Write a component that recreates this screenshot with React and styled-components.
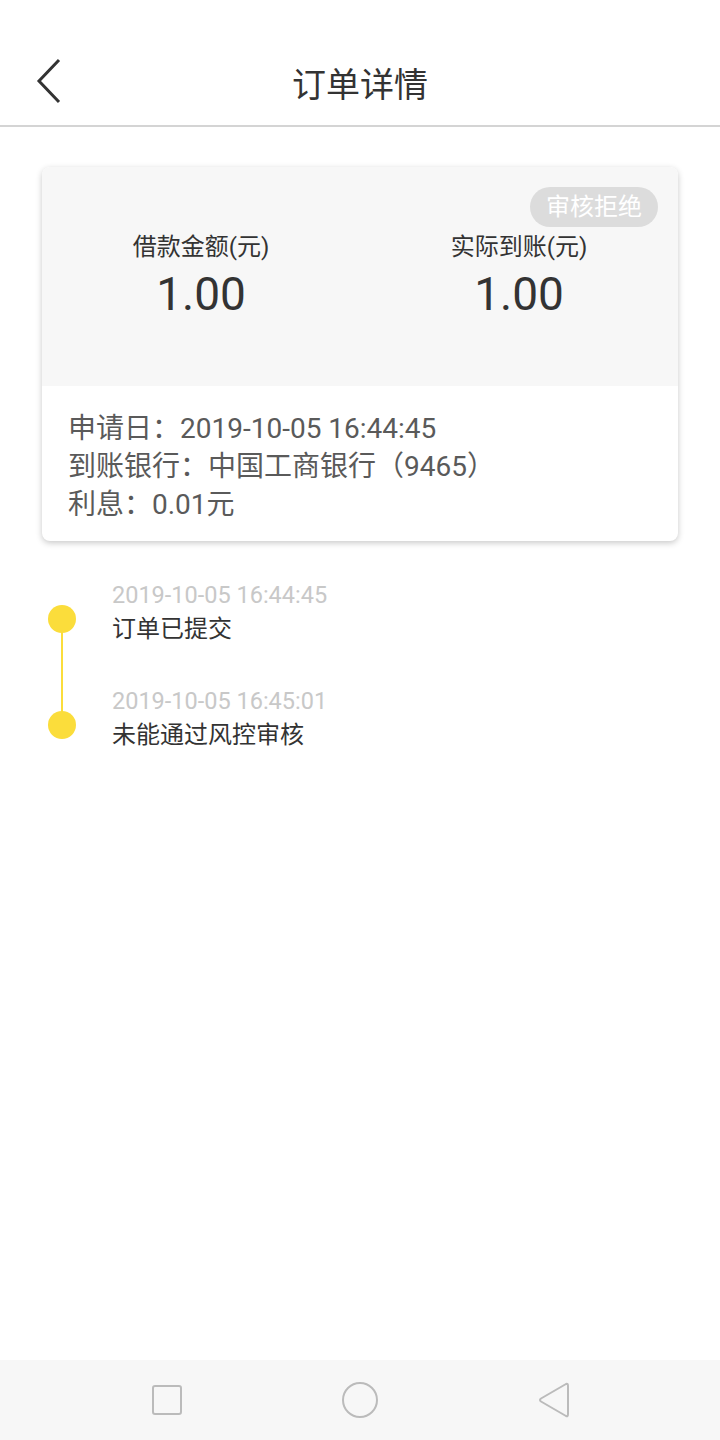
import React from 'react';
import styled, { createGlobalStyle } from 'styled-components';

const GlobalStyle = createGlobalStyle`
  html, body {
    margin: 0;
    padding: 0;
    background: #fff;
    font-family: Roboto, "Noto Sans CJK SC", sans-serif;
  }
`;

const Page = styled.main`
  width: 720px;
  height: 1440px;
  display: flex;
  flex-direction: column;
  background: #fff;
`;

const Header = styled.header`
  height: 127px;
  padding-top: 40px;
  box-sizing: border-box;
  display: flex;
  align-items: center;
  justify-content: center;
  position: relative;
  border-bottom: 2px solid #d4d4d4;
`;

const BackButton = styled.button`
  position: absolute;
  left: 30px;
  top: 55px;
  width: 40px;
  height: 52px;
  border: 0;
  padding: 0;
  background: transparent;
`;

const Title = styled.h1`
  margin: 0;
  font-size: 34px;
  font-weight: 400;
  color: #333;
`;

const Content = styled.section`
  flex: 1;
  padding: 40px 42px 0;
`;

const Card = styled.div`
  border-radius: 8px;
  overflow: hidden;
  box-shadow: 0 2px 6px rgba(0, 0, 0, 0.22);
  background: #fff;
`;

const CardTop = styled.div`
  position: relative;
  height: 219px;
  background: #f7f7f7;
  display: grid;
  grid-template-columns: 1fr 1fr;
  padding-top: 64px;
  box-sizing: border-box;
`;

const Badge = styled.span`
  position: absolute;
  top: 20px;
  right: 20px;
  height: 40px;
  padding: 0 16px;
  border-radius: 20px;
  background: #dcdcdc;
  color: #fff;
  font-size: 24px;
  line-height: 40px;
`;

const Amount = styled.div`
  display: flex;
  flex-direction: column;
  align-items: center;
`;

const AmountLabel = styled.span`
  font-size: 24px;
  color: #333;
  line-height: 32px;
`;

const AmountValue = styled.span`
  font-size: 46px;
  color: #333;
  line-height: 54px;
  margin-top: 4px;
`;

const CardInfo = styled.div`
  padding: 24px 26px 17px;
  display: flex;
  flex-direction: column;
`;

const InfoLine = styled.p`
  margin: 0;
  font-size: 28px;
  line-height: 38px;
  color: #5a5a5a;
`;

const Timeline = styled.ul`
  list-style: none;
  margin: 40px 0 0;
  padding: 0;
`;

const Step = styled.li`
  position: relative;
  padding-left: 70px;
  height: 106px;

  &::before {
    content: '';
    position: absolute;
    left: 6px;
    top: 24px;
    width: 28px;
    height: 28px;
    border-radius: 50%;
    background: #fbdd3b;
  }

  &:not(:last-child)::after {
    content: '';
    position: absolute;
    left: 19px;
    top: 38px;
    width: 2px;
    height: 106px;
    background: #fbdd3b;
  }
`;

const StepTime = styled.div`
  font-size: 23.5px;
  line-height: 28px;
  color: #c8c8c8;
`;

const StepText = styled.div`
  font-size: 24px;
  line-height: 34px;
  margin-top: 3px;
  color: #333;
`;

const NavBar = styled.nav`
  height: 80px;
  background: #f7f7f7;
  display: flex;
  align-items: center;
  justify-content: center;
  gap: 153px;
`;

const NavIcon = styled.svg`
  width: 40px;
  height: 40px;
`;

const steps = [
  { time: '2019-10-05 16:44:45', text: '订单已提交' },
  { time: '2019-10-05 16:45:01', text: '未能通过风控审核' },
];

export default function App() {
  return (
    <>
      <GlobalStyle />
      <Page>
        <Header>
          <BackButton aria-label="返回">
            <svg width="40" height="52" viewBox="0 0 40 52">
              <path d="M29 5 L9 26 L29 47" fill="none" stroke="#333" strokeWidth="3" />
            </svg>
          </BackButton>
          <Title>订单详情</Title>
        </Header>
        <Content>
          <Card>
            <CardTop>
              <Badge>审核拒绝</Badge>
              <Amount>
                <AmountLabel>借款金额(元)</AmountLabel>
                <AmountValue>1.00</AmountValue>
              </Amount>
              <Amount>
                <AmountLabel>实际到账(元)</AmountLabel>
                <AmountValue>1.00</AmountValue>
              </Amount>
            </CardTop>
            <CardInfo>
              <InfoLine>申请日：2019-10-05 16:44:45</InfoLine>
              <InfoLine>到账银行：中国工商银行（9465）</InfoLine>
              <InfoLine>利息：0.01元</InfoLine>
            </CardInfo>
          </Card>
          <Timeline>
            {steps.map((s) => (
              <Step key={s.time}>
                <StepTime>{s.time}</StepTime>
                <StepText>{s.text}</StepText>
              </Step>
            ))}
          </Timeline>
        </Content>
        <NavBar>
          <NavIcon viewBox="0 0 40 40">
            <rect x="6" y="6" width="28" height="28" rx="2" fill="none" stroke="#bbb" strokeWidth="2" />
          </NavIcon>
          <NavIcon viewBox="0 0 40 40">
            <circle cx="20" cy="20" r="17" fill="none" stroke="#bbb" strokeWidth="2" />
          </NavIcon>
          <NavIcon viewBox="0 0 40 40">
            <path d="M33 4 Q35 3 35 6 L35 34 Q35 37 33 36 L8 21.5 Q6 20 8 18.5 Z" fill="none" stroke="#bbb" strokeWidth="2" strokeLinejoin="round" />
          </NavIcon>
        </NavBar>
      </Page>
    </>
  );
}
